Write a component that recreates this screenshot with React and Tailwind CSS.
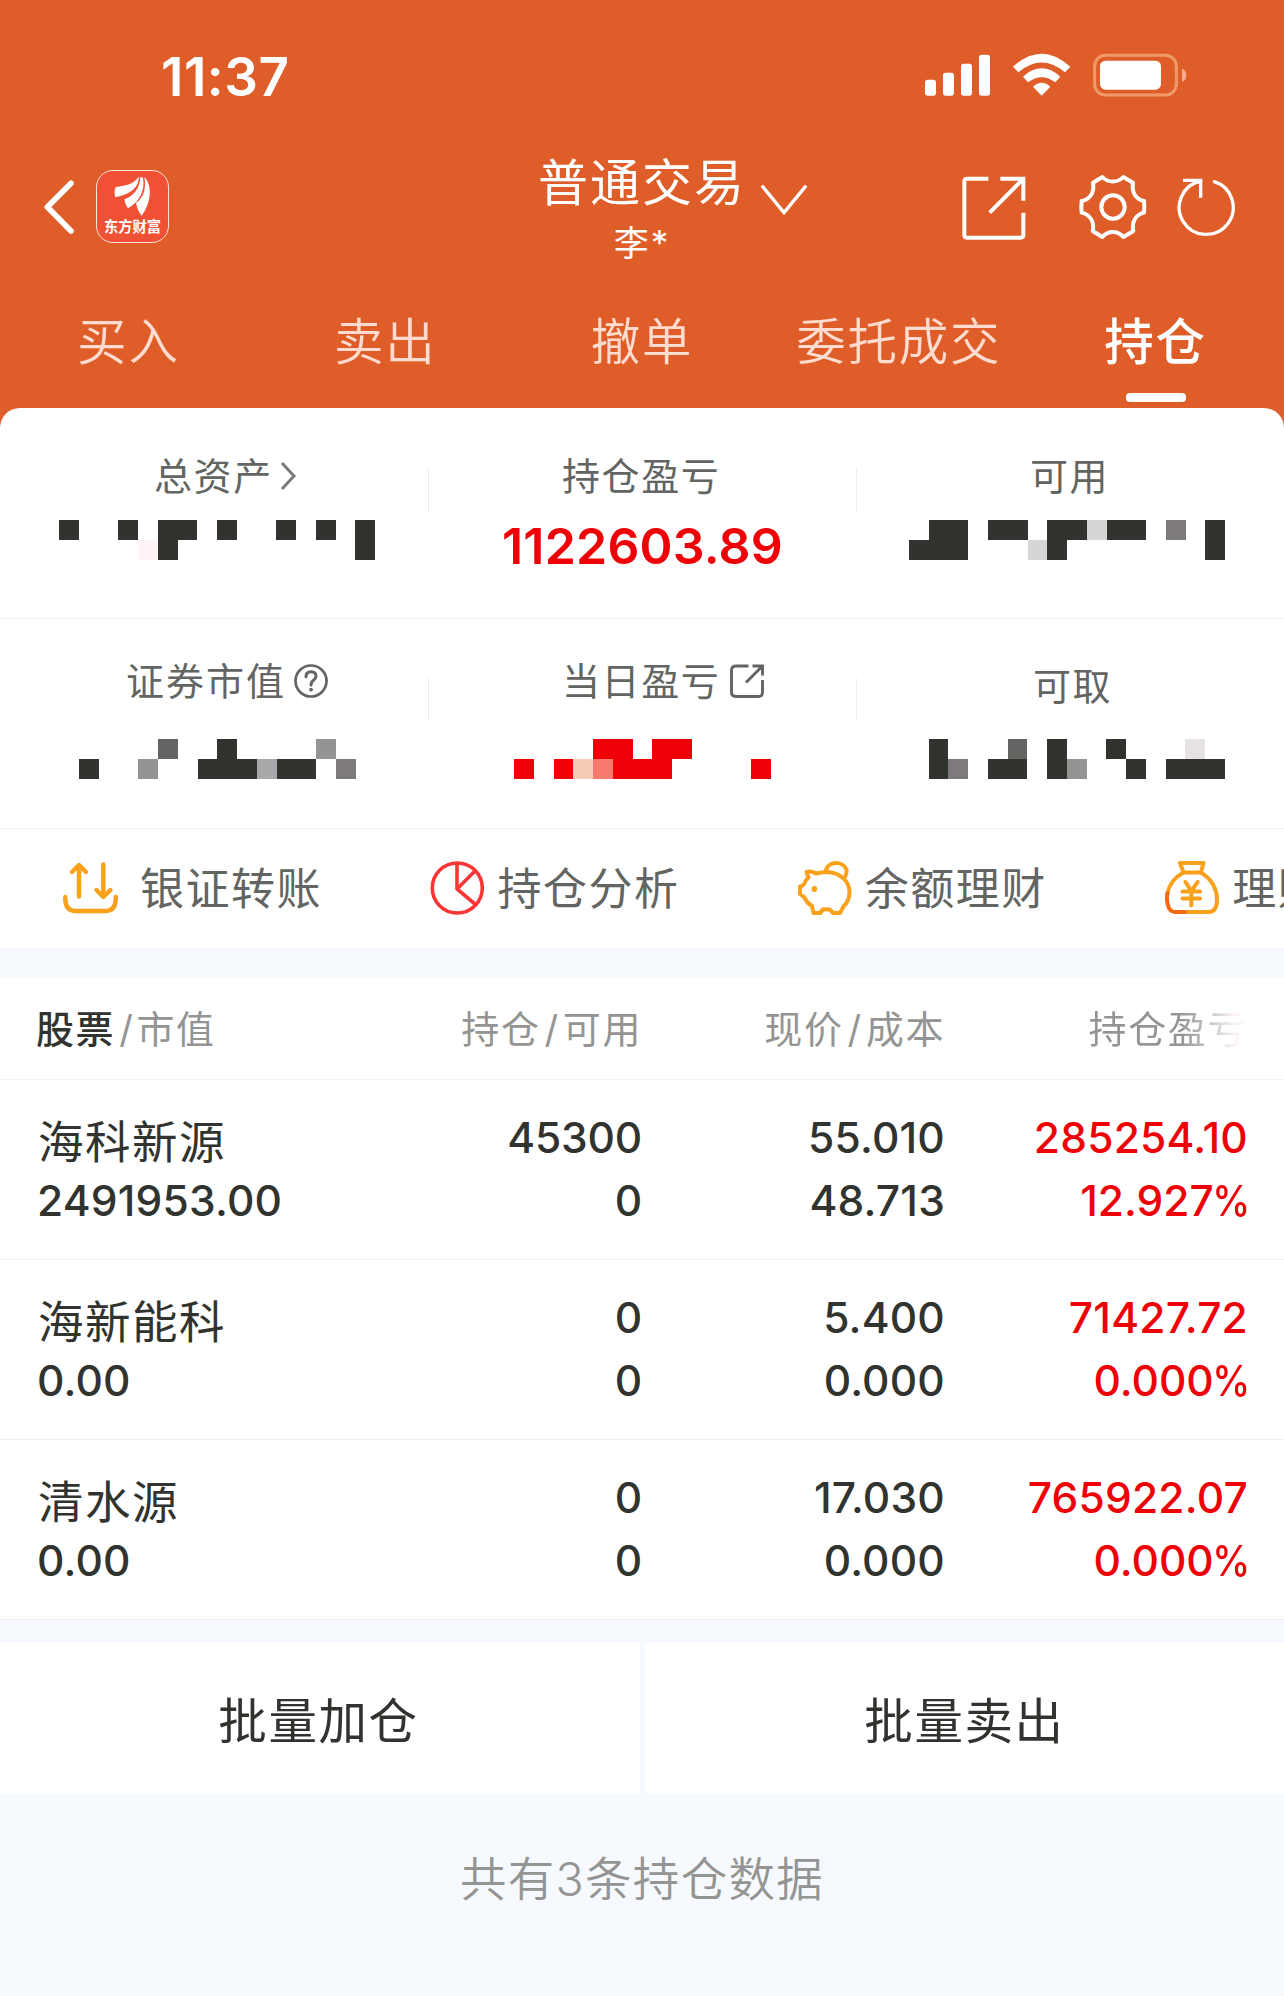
import React from 'react';

const TABS = ['买入', '卖出', '撤单', '委托成交', '持仓'];

const HOLDINGS = [
  { name: '海科新源', value: '2491953.00', qty: '45300', usable: '0', price: '55.010', cost: '48.713', profit: '285254.10', rate: '12.927' },
  { name: '海新能科', value: '0.00', qty: '0', usable: '0', price: '5.400', cost: '0.000', profit: '71427.72', rate: '0.000' },
  { name: '清水源', value: '0.00', qty: '0', usable: '0', price: '17.030', cost: '0.000', profit: '765922.07', rate: '0.000' },
];

// Hidden amounts, one character per mosaic tile
const MASKS = {
  total: ['D..D.DD.D..D.D.D', '....PD.........D'],
  available: ['.DD.DD.DDLDD.G.D', 'DDD...LD.......D'],
  market: ['....K..D....M.', 'D..M..DDDADD.G'],
  today: ['....RR.RR....', 'R.RpsRRR....R'],
  withdraw: ['D...K.D..D...E.', 'DG.DD.DM..D.DDD'],
};

const TILE = {
  '.': '',
  D: 'bg-[#31332f]',
  K: 'bg-[#636562]',
  G: 'bg-[#7d797d]',
  M: 'bg-[#949593]',
  A: 'bg-[#aba8ab]',
  L: 'bg-[#d6d6d6]',
  E: 'bg-[#e6e1e5]',
  P: 'bg-[#fff5f6]',
  R: 'bg-[#ef0006]',
  p: 'bg-[#f6cbb7]',
  s: 'bg-[#f87a6e]',
};

const Mosaic = ({ rows, className }) => (
  <div className={className}>
    {rows.map((row, i) => (
      <div key={i} className="flex h-5">
        {row.split('').map((c, j) => (
          <span key={j} className={`h-5 w-[19.754px] shrink-0 ${TILE[c]}`} />
        ))}
      </div>
    ))}
  </div>
);

const StatusIcons = () => (
  <svg className="h-[44px] w-[264px]" viewBox="132 70 792 132" fill="#fff">
    <rect x="135" y="150" width="33" height="48" rx="8" />
    <rect x="189" y="129" width="33" height="69" rx="8" />
    <rect x="243" y="102" width="33" height="96" rx="8" />
    <rect x="297" y="75" width="33" height="123" rx="8" />
    <path d="M399 111Q485 33 571 111L555 128Q485 69 415 128Z" />
    <path d="M429 141Q485 91 541 141L526 158Q485 127 444 158Z" />
    <path d="M485 198L459 171Q485 147 511 171Z" />
    <rect x="644" y="77" width="245" height="119" rx="32" fill="none" stroke="#f09a6a" strokeWidth="9" />
    <rect x="660" y="93" width="183" height="87" rx="17" />
    <path d="M906 117Q919 122 919 137Q919 152 906 157Z" fill="#f5a892" />
  </svg>
);

const BackIcon = () => (
  <svg className="h-[56px] w-[34px]" viewBox="126 475 102 168" fill="none" stroke="#fff" strokeWidth="17" strokeLinecap="round" strokeLinejoin="round">
    <path d="M213 488L142 559L213 631" />
  </svg>
);

const AppLogo = () => (
  <div className="flex h-[73px] w-[73px] flex-col items-center rounded-[17px] border-[1.5px] border-[#ffe3da] bg-[#f05033] pt-1">
    <svg className="h-[42px] w-[42px]" viewBox="332 464 126 126" fill="#fff">
      <path d="M412 468C402 490 375 497 343 500Q337 515 342 531C378 523 414 508 412 468Z" />
      <path d="M417 470C416 505 395 528 369 537Q371 552 380 564C412 545 432 515 425 472Z" />
      <path d="M429 470C436 505 425 535 404 547Q408 570 421 586C445 555 458 500 429 470Z" />
    </svg>
    <span className="mt-[1px] text-[14.3px] leading-[18px] font-bold whitespace-nowrap text-white">东方财富</span>
  </div>
);

const ShareIcon = () => (
  <svg className="h-[66px] w-[66px]" viewBox="236 436 198 198" fill="none" stroke="#fff" strokeWidth="12">
    <path d="M318 447H254Q246 447 246 455V616Q246 624 254 624H415Q423 624 423 616V549M354 447H423V513M423 447L322 549" />
  </svg>
);

const GearIcon = () => (
  <svg className="h-[66px] w-[70px]" viewBox="590 432 210 198" fill="none" stroke="#fff" strokeWidth="12" strokeLinejoin="round">
    <path d="M663 441L635 458C640 488 626 508 601 513Q599 530 601 548C626 554 640 574 634 603L663 621C680 601 709 601 726 621L756 603C750 574 764 554 788 548Q790 530 788 513C764 508 750 488 755 458L726 441C709 459 680 459 663 441Z" />
    <circle cx="695" cy="531" r="35" />
  </svg>
);

const RefreshIcon = () => (
  <svg className="h-[62px] w-[62px]" viewBox="885 438 186 186" fill="none" stroke="#fff" strokeWidth="10">
    <path d="M997 455A81 81 0 1 1 956 453" strokeLinecap="round" />
    <path d="M903 451H956V503" />
  </svg>
);

const DownIcon = () => (
  <svg className="h-[32px] w-[48px]" viewBox="778 163 144 96" fill="none" stroke="#fff" strokeWidth="10">
    <path d="M786 171L850 249L914 171" strokeLinecap="round" />
  </svg>
);

const TransferIcon = () => (
  <svg className="h-[54px] w-[55px]" viewBox="0 0 55 54" fill="none" stroke="#f9a11b" strokeWidth="4.4" strokeLinecap="round" strokeLinejoin="round">
    <path d="M9 11L16 4L23 11M16 5V35.5M40.3 3.5V35M33.5 29L40.3 36L47.5 29M2.3 36V38Q2.3 50 13 50H42Q52.7 50 52.7 38V36" />
  </svg>
);

const PieIcon = () => (
  <svg className="h-[54px] w-[55px]" viewBox="0 0 55 54" fill="none" stroke="#fb3635" strokeWidth="3.6">
    <circle cx="27.3" cy="27" r="25" />
    <path d="M27 2V28L45.5 43.5M27 28L45 10" />
  </svg>
);

const PiggyIcon = () => (
  <svg className="h-[54px] w-[55px]" viewBox="0 0 55 54" fill="none" stroke="#f9a11b" strokeWidth="4" strokeLinejoin="round" strokeLinecap="round">
    <path d="M8.5 11Q13 9.5 18 12.5Q24 11 30 11C43 12 51.5 21 51.5 31Q51.5 40 45.5 45.5L42 52H35Q32.5 47.5 28 48.5Q24 47.5 22.5 52H15.5L14 45Q9 42 6 36L2 33V25.5Q6 25 7.5 20L10.5 16.5Z" />
    <path d="M27.5 11C29-.5 45-.5 48.5 8.5Q49 13 46.5 17" />
    <circle cx="16.4" cy="28" r="2.9" fill="#f9a11b" stroke="none" />
  </svg>
);

const BagIcon = () => (
  <svg className="h-[54px] w-[55px]" viewBox="0 0 55 54" fill="none" stroke="#f9a11b" strokeWidth="4" strokeLinejoin="round" strokeLinecap="round">
    <path d="M15 2H38.5L36 11.5H18.5ZM35.5 11.5C46 17 52 28 52 38Q52 51 44 51H22" />
    <path d="M18.5 11.5C10 16 4 24 2.5 32" />
    <path d="M2.5 32C1.5 37 1.5 51 10 51H20" stroke="#f26a16" />
    <path d="M20.4 21L26.3 30L32.7 21M26.3 30V44.5M17.5 30.5H35M17.5 37.5H35" />
  </svg>
);

const HelpIcon = () => (
  <svg className="h-[34px] w-[34px]" viewBox="0 0 34 34" fill="none" stroke="#636562" strokeWidth="2.7" strokeLinecap="round">
    <circle cx="17" cy="17" r="15.5" />
    <path d="M12 12.8Q12 7.8 17 7.8Q22 7.8 22 12.3Q22 14.5 19.5 16.2Q17 18 17 21" strokeWidth="3" />
    <circle cx="17" cy="25.7" r="1.9" fill="#636562" stroke="none" />
  </svg>
);

const OpenIcon = () => (
  <svg className="h-[34px] w-[34px]" viewBox="0 0 34 34" fill="none" stroke="#636562" strokeWidth="2.9">
    <path d="M18.5 2H6Q1.5 2 1.5 6.5V28Q1.5 32.5 6 32.5H28.5Q32.5 32.5 32.5 28.5V16M22.5 2H32.5V11.5M32.5 2L16 18.5" />
  </svg>
);

const ACTIONS = [
  { label: '银证转账', Icon: TransferIcon, gap: 'gap-[22px]' },
  { label: '持仓分析', Icon: PieIcon, gap: 'gap-[12px]' },
  { label: '余额理财', Icon: PiggyIcon, gap: 'gap-[12px]' },
  { label: '理财', Icon: BagIcon, gap: 'gap-[12px]' },
];

const Label = ({ children, className }) => (
  <div className={`flex h-[50px] items-center text-[38px] leading-[50px] tracking-[1.6px] whitespace-nowrap text-[#636562] ${className}`}>{children}</div>
);

export default function App() {
  return (
    <div className="h-[1996px] w-[1284px] overflow-hidden bg-[#f6faff] font-['Inter','Noto_Sans_CJK_SC',sans-serif] text-[#31332f]">

      {/* HEADER */}
      <div className="h-[438px] bg-[#df5d29] text-white">
        <div className="flex h-[150px] items-start justify-between pr-[96px] pl-[161px]">
          <span className="mt-[45px] text-[53px] leading-[64px] font-semibold tracking-[0.5px]">11:37</span>
          <div className="pt-[53px]"><StatusIcons /></div>
        </div>

        <div className="flex h-[130px] items-start">
          <div className="flex w-[400px] items-center gap-[20px] pt-[20px] pl-[42px]">
            <BackIcon />
            <AppLogo />
          </div>
          <div className="flex flex-1 items-start pl-[141px]">
            <div className="flex w-[202px] flex-col items-center">
              <span className="text-[50px] leading-[67px] tracking-[2px] whitespace-nowrap">普通交易</span>
              <span className="mt-[1px] text-[35px] leading-[50px] tracking-[2px]">李*</span>
            </div>
            <div className="mt-[34px] ml-[17px]">
              <DownIcon />
            </div>
          </div>
          <div className="flex items-start pr-[46px]">
            <div className="mt-[25px]"><ShareIcon /></div>
            <div className="mt-[24px] ml-[51px]"><GearIcon /></div>
            <div className="mt-[26px] -mr-[1px] ml-[29px]"><RefreshIcon /></div>
          </div>
        </div>

        <div className="grid grid-cols-5 pt-[24px]">
          {TABS.map((tab) => {
            const active = tab === '持仓';
            return (
              <div key={tab} className="flex flex-col items-center">
                <span className={`text-[49.5px] leading-[76px] tracking-[1.8px] whitespace-nowrap ${active ? 'font-medium text-white' : 'font-[350] text-[#ffdccf]'}`}>{tab}</span>
                {active && <span className="mt-[13px] h-[9px] w-[60px] rounded-[4px] bg-white" />}
              </div>
            );
          })}
        </div>
      </div>

      {/* ASSETS */}
      <div className="relative -mt-[30px] rounded-t-[20px] bg-white">
        <div className="grid h-[211px] grid-cols-3 border-b border-[#f4eeef]">
          <div className="pt-[43px]">
            <Label className="pl-[154px]">
              总资产
              <svg className="ml-[7px] h-[30px] w-[17px]" viewBox="0 0 17 30" fill="none" stroke="#7b7b7b" strokeWidth="3"><path d="M2 2L14 15L2 28" /></svg>
            </Label>
            <Mosaic rows={MASKS.total} className="mt-[19px] pl-[59px]" />
          </div>
          <div className="flex">
            <span className="mt-[60px] h-[45px] w-px bg-[#ededed]" />
            <div className="flex-1 pt-[43px]">
              <Label className="pl-[133px]">持仓盈亏</Label>
              <div className="mt-[15px] pl-[73px] text-[50px] leading-[60px] font-semibold tracking-[0.2px] text-[#ef0006]">1122603.89</div>
            </div>
          </div>
          <div className="flex">
            <span className="mt-[60px] h-[43px] w-px bg-[#f4eeef]" />
            <div className="flex-1 pt-[43px]">
              <Label className="pl-[173px]">可用</Label>
              <Mosaic rows={MASKS.available} className="mt-[19px] pl-[52px]" />
            </div>
          </div>
        </div>

        <div className="grid h-[210px] grid-cols-3 border-b border-[#f4eeef]">
          <div className="pt-[37px]">
            <Label className="pl-[126px]"><span className="tracking-[2px]">证券市值</span><span className="ml-[8px]"><HelpIcon /></span></Label>
            <Mosaic rows={MASKS.market} className="mt-[33px] pl-[79px]" />
          </div>
          <div className="flex">
            <span className="mt-[59px] h-[42px] w-px bg-[#ededed]" />
            <div className="flex-1 pt-[37px]">
              <Label className="pl-[133px]">当日盈亏<span className="ml-[10px]"><OpenIcon /></span></Label>
              <Mosaic rows={MASKS.today} className="mt-[33px] pl-[85px]" />
            </div>
          </div>
          <div className="flex">
            <span className="mt-[59px] h-[42px] w-px bg-[#f4eeef]" />
            <div className="flex-1 pt-[42px]">
              <Label className="pl-[176px]">可取</Label>
              <Mosaic rows={MASKS.withdraw} className="mt-[28px] pl-[71.5px]" />
            </div>
          </div>
        </div>

        {/* QUICK ACTIONS */}
        <div className="flex h-[119px] overflow-hidden pt-[32px] pl-[63px]">
          {ACTIONS.map(({ label, Icon, gap }) => (
            <div key={label} className={`flex h-[54px] w-[367.4px] shrink-0 items-center ${gap}`}>
              <Icon />
              <span className="pt-[2px] text-[44px] leading-[54px] tracking-[1.5px] whitespace-nowrap text-[#636562]">{label}</span>
            </div>
          ))}
        </div>
      </div>

      {/* HOLDINGS */}
      <div className="mt-[30px] bg-white">
        <div className="grid h-[102px] grid-cols-[340px_302px_303px_302px] border-b border-[#f8f0f0] pt-[26px] text-right text-[38px] leading-[50px] tracking-[1.6px] whitespace-nowrap text-[#949593]">
          <div className="pl-[36px] text-left"><span className="font-medium text-[#31332f]">股票</span><span className="mr-[2px] ml-[4px]">/</span>市值</div>
          <div>持仓<span className="mr-[3px] ml-[4px]">/</span>可用</div>
          <div>现价<span className="mr-[3px] ml-[4px]">/</span>成本</div>
          <div className="bg-linear-to-r from-[#949593] from-[78%] to-[#fbf3f4] to-[96%] bg-clip-text text-transparent">持仓盈亏</div>
        </div>
        {HOLDINGS.map((h) => (
          <div key={h.name} className="grid h-[180px] grid-cols-[340px_302px_303px_303px] border-b border-[#f4eeef] pt-[26px] text-right text-[42.5px] leading-[63px] font-medium">
            <div className="pl-[37px] text-left">
              <div className="h-[63px] pl-[1px] text-[45.5px] leading-[73px] font-normal tracking-[1.5px]">{h.name}</div>
              <div className="tracking-[0.2px]">{h.value}</div>
            </div>
            <div className="tracking-[-0.2px]"><div>{h.qty}</div><div>{h.usable}</div></div>
            <div className="tracking-[0.2px]"><div>{h.price}</div><div>{h.cost}</div></div>
            <div className="text-[#ef0006]">
              <div className="tracking-[0.2px]">{h.profit}</div>
              <div>{h.rate}<span className="-mr-[2px] -ml-[6px] inline-block origin-right scale-x-90">%</span></div>
            </div>
          </div>
        ))}
      </div>

      {/* BATCH BUTTONS */}
      <div className="mt-[23px] flex h-[151px] gap-[5px] text-[48.5px] tracking-[1.6px]">
        <button className="w-[640px] bg-white pt-[8px] pr-[3px]">批量加仓</button>
        <button className="flex-1 bg-white pt-[8px]">批量卖出</button>
      </div>

      <div className="pt-[50px] text-center text-[46.5px] leading-[70px] font-[350] tracking-[1.3px] text-[#949593]">共有3条持仓数据</div>
    </div>
  );
}
